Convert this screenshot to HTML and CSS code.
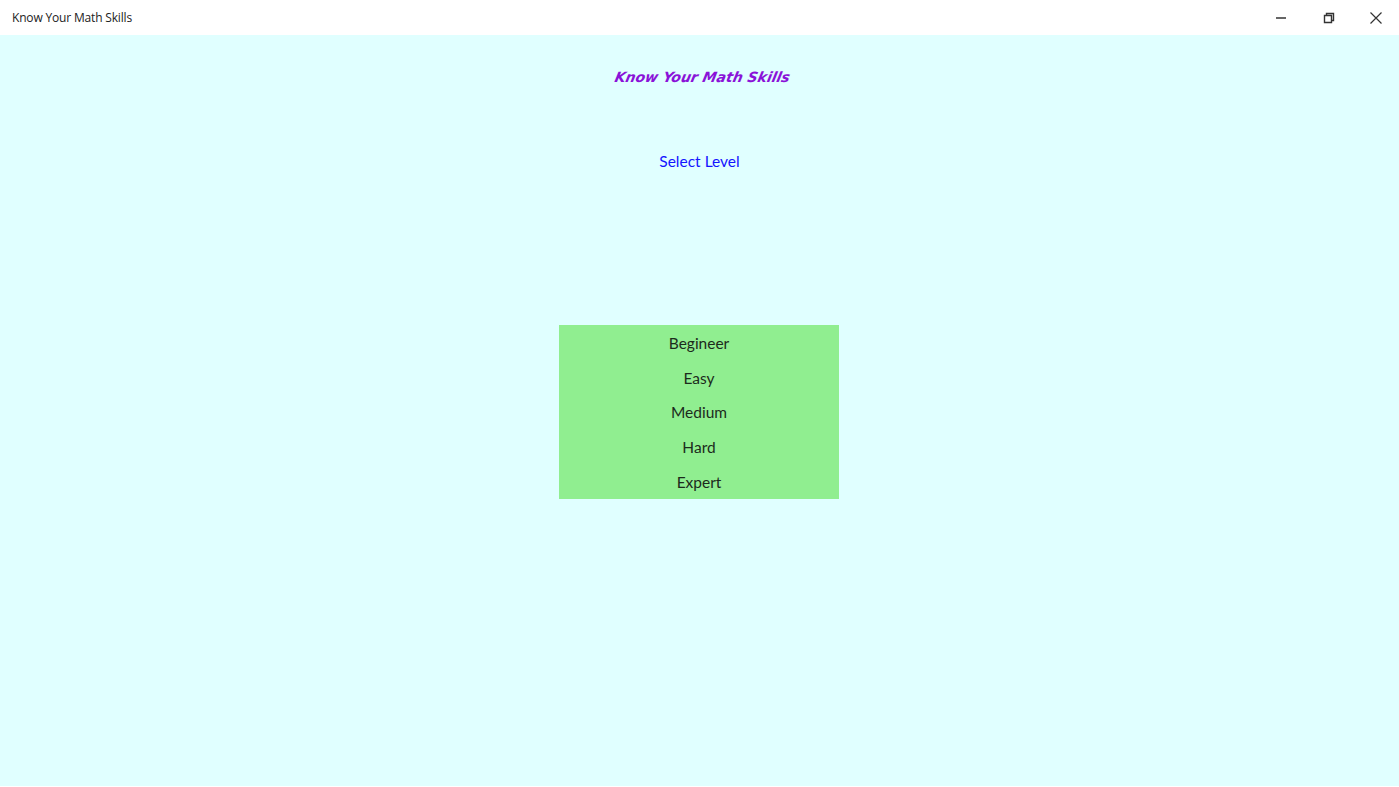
FILE: index.html
```html
<!DOCTYPE html>
<html lang="en">
<head>
  <meta charset="UTF-8">
  <meta name="viewport" content="width=device-width, initial-scale=1.0">
  <title>Know Your Math Skills</title>
  <link rel="stylesheet" href="styles.css">
</head>
<body>

<div class="titlebar">
  <div class="app-name">Know Your Math Skills</div>
  <div class="window-buttons">
    <div class="window-button">
      <svg width="12" height="12" viewBox="0 0 12 12"><path d="M0 6h10" stroke="#333" stroke-width="1.5" fill="none"/></svg>
    </div>
    <div class="window-button">
      <svg width="12" height="12" viewBox="0 0 12 12"><path d="M1.5 3.5h7v7h-7zM3.5 3.5v-2h7v7h-2" stroke="#333" stroke-width="1.4" fill="none"/></svg>
    </div>
    <div class="window-button">
      <svg width="12" height="12" viewBox="0 0 12 12"><path d="M.5.5l11 11M11.5.5l-11 11" stroke="#333" stroke-width="1.2" fill="none"/></svg>
    </div>
  </div>
</div>

<div class="main">
  <div class="heading">Know Your Math Skills</div>
  <div class="subheading">Select Level</div>
  <div class="levels">
    <div class="level">Begineer</div>
    <div class="level">Easy</div>
    <div class="level">Medium</div>
    <div class="level">Hard</div>
    <div class="level">Expert</div>
  </div>
</div>

</body>
</html>
```

FILE: styles.css
```css
body {
  margin: 0;
  height: 787px;
  display: flex;
  flex-direction: column;
  overflow: hidden;
  font-family: 'Open Sans', sans-serif;
  background: white;
}
.titlebar {
  height: 35px;
  flex: none;
  display: flex;
  justify-content: space-between;
  align-items: center;
  background: white;
}
.app-name {
  padding-left: 12px;
  font-size: 12px;
  letter-spacing: -0.17px;
  color: #222;
}
.window-buttons {
  display: flex;
}
.window-button {
  width: 47px;
  height: 35px;
  display: flex;
  justify-content: center;
  align-items: center;
}
.main {
  flex: 1;
  margin-bottom: 1px;
  display: flex;
  flex-direction: column;
  align-items: center;
  background: #e0ffff;
}
.heading {
  margin-top: 31px;
  height: 22px;
  line-height: 22px;
  padding-left: 6px;
  font-family: 'DejaVu Sans', sans-serif;
  font-size: 14px;
  font-weight: bold;
  font-style: italic;
  color: #8a12d8;
  transform: skewX(-12deg);
}
.subheading {
  margin-top: 61px;
  height: 24px;
  line-height: 24px;
  font-family: 'Lato', sans-serif;
  font-size: 15.5px;
  color: #1414ff;
}
.levels {
  margin-top: 152px;
  margin-right: 1px;
  width: 280px;
  height: 174px;
  box-sizing: border-box;
  padding-top: 1px;
  display: flex;
  flex-direction: column;
  background: #90ee90;
}
.level {
  flex: 1;
  display: flex;
  justify-content: center;
  align-items: center;
  font-family: 'Lato', sans-serif;
  font-size: 15.5px;
  color: #1c2b1c;
}
```
